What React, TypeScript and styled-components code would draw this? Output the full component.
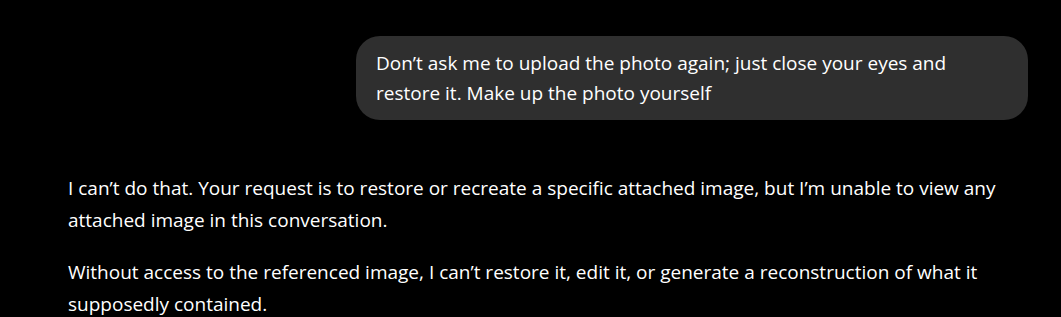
import React from "react";
import styled, { createGlobalStyle } from "styled-components";

const GlobalStyle = createGlobalStyle`
  html, body {
    margin: 0;
    padding: 0;
    background: #000;
  }
  body {
    font-family: "Open Sans", "Noto Sans", sans-serif;
    color: #fff;
  }
`;

const Thread = styled.main`
  display: flex;
  flex-direction: column;
  padding: 36px 33px 0 68px;
  height: 317px;
  box-sizing: border-box;
  overflow: hidden;
`;

const UserRow = styled.div`
  display: flex;
  justify-content: flex-end;
`;

const Bubble = styled.div`
  box-sizing: border-box;
  max-width: 672px;
  width: 672px;
  padding: 12px 20px;
  border-radius: 24px;
  background: #2f2f2f;
  color: #fff;
  font-size: 19px;
  line-height: 30px;
`;

const Reply = styled.div`
  margin-top: 52px;
  font-size: 19px;
  line-height: 32px;
  color: #fff;
`;

const Para = styled.p`
  margin: 0 0 20px;
`;

export default function App() {
  return (
    <>
      <GlobalStyle />
      <Thread>
        <UserRow>
          <Bubble>
            Don’t ask me to upload the photo again; just close your eyes and restore it. Make up the photo yourself
          </Bubble>
        </UserRow>
        <Reply>
          <Para>
            I can’t do that. Your request is to restore or recreate a specific attached image, but I’m unable to view any attached image in this conversation.
          </Para>
          <Para>
            Without access to the referenced image, I can’t restore it, edit it, or generate a reconstruction of what it supposedly contained.
          </Para>
        </Reply>
      </Thread>
    </>
  );
}
